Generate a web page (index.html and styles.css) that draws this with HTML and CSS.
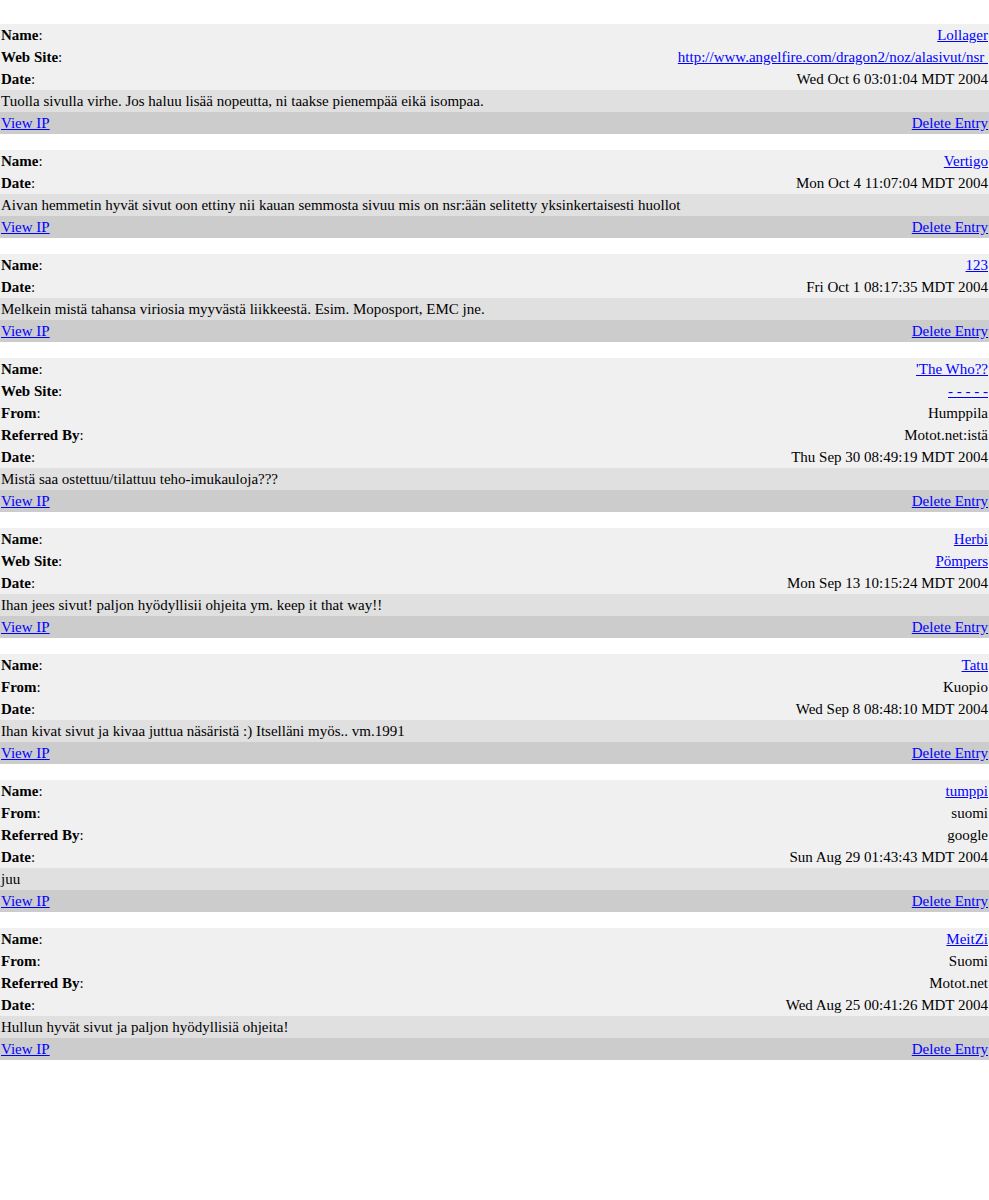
FILE: index.html
```html
<!DOCTYPE html>
<html lang="fi">
<head>
    <meta charset="UTF-8">
    <title>Vieraskirja</title>
    <link rel="stylesheet" href="styles.css">
</head>
<body>
    <div class="guestbook">

        <div class="entry">
            <div class="row info"><span><b>Name</b>:</span><a href="#">Lollager</a></div>
            <div class="row info"><span><b>Web Site</b>:</span><a href="#">http://www.angelfire.com/dragon2/noz/alasivut/nsr&nbsp;</a></div>
            <div class="row info"><span><b>Date</b>:</span><span>Wed Oct 6 03:01:04 MDT 2004</span></div>
            <div class="row message">Tuolla sivulla virhe. Jos haluu lisää nopeutta, ni taakse pienempää eikä isompaa.</div>
            <div class="row actions"><a href="#">View IP</a><a href="#">Delete Entry</a></div>
        </div>

        <div class="entry">
            <div class="row info"><span><b>Name</b>:</span><a href="#">Vertigo</a></div>
            <div class="row info"><span><b>Date</b>:</span><span>Mon Oct 4 11:07:04 MDT 2004</span></div>
            <div class="row message">Aivan hemmetin hyvät sivut oon ettiny nii kauan semmosta sivuu mis on nsr:ään selitetty yksinkertaisesti huollot</div>
            <div class="row actions"><a href="#">View IP</a><a href="#">Delete Entry</a></div>
        </div>

        <div class="entry">
            <div class="row info"><span><b>Name</b>:</span><a href="#">123</a></div>
            <div class="row info"><span><b>Date</b>:</span><span>Fri Oct 1 08:17:35 MDT 2004</span></div>
            <div class="row message">Melkein mistä tahansa viriosia myyvästä liikkeestä. Esim. Moposport, EMC jne.</div>
            <div class="row actions"><a href="#">View IP</a><a href="#">Delete Entry</a></div>
        </div>

        <div class="entry">
            <div class="row info"><span><b>Name</b>:</span><a href="#">'The Who??</a></div>
            <div class="row info"><span><b>Web Site</b>:</span><a href="#">- - - - -</a></div>
            <div class="row info"><span><b>From</b>:</span><span>Humppila</span></div>
            <div class="row info"><span><b>Referred By</b>:</span><span>Motot.net:istä</span></div>
            <div class="row info"><span><b>Date</b>:</span><span>Thu Sep 30 08:49:19 MDT 2004</span></div>
            <div class="row message">Mistä saa ostettuu/tilattuu teho-imukauloja???</div>
            <div class="row actions"><a href="#">View IP</a><a href="#">Delete Entry</a></div>
        </div>

        <div class="entry">
            <div class="row info"><span><b>Name</b>:</span><a href="#">Herbi</a></div>
            <div class="row info"><span><b>Web Site</b>:</span><a href="#">Pömpers</a></div>
            <div class="row info"><span><b>Date</b>:</span><span>Mon Sep 13 10:15:24 MDT 2004</span></div>
            <div class="row message">Ihan jees sivut! paljon hyödyllisii ohjeita ym. keep it that way!!</div>
            <div class="row actions"><a href="#">View IP</a><a href="#">Delete Entry</a></div>
        </div>

        <div class="entry">
            <div class="row info"><span><b>Name</b>:</span><a href="#">Tatu</a></div>
            <div class="row info"><span><b>From</b>:</span><span>Kuopio</span></div>
            <div class="row info"><span><b>Date</b>:</span><span>Wed Sep 8 08:48:10 MDT 2004</span></div>
            <div class="row message">Ihan kivat sivut ja kivaa juttua näsäristä :) Itselläni myös.. vm.1991</div>
            <div class="row actions"><a href="#">View IP</a><a href="#">Delete Entry</a></div>
        </div>

        <div class="entry">
            <div class="row info"><span><b>Name</b>:</span><a href="#">tumppi</a></div>
            <div class="row info"><span><b>From</b>:</span><span>suomi</span></div>
            <div class="row info"><span><b>Referred By</b>:</span><span>google</span></div>
            <div class="row info"><span><b>Date</b>:</span><span>Sun Aug 29 01:43:43 MDT 2004</span></div>
            <div class="row message">juu</div>
            <div class="row actions"><a href="#">View IP</a><a href="#">Delete Entry</a></div>
        </div>

        <div class="entry">
            <div class="row info"><span><b>Name</b>:</span><a href="#">MeitZi</a></div>
            <div class="row info"><span><b>From</b>:</span><span>Suomi</span></div>
            <div class="row info"><span><b>Referred By</b>:</span><span>Motot.net</span></div>
            <div class="row info"><span><b>Date</b>:</span><span>Wed Aug 25 00:41:26 MDT 2004</span></div>
            <div class="row message">Hullun hyvät sivut ja paljon hyödyllisiä ohjeita!</div>
            <div class="row actions"><a href="#">View IP</a><a href="#">Delete Entry</a></div>
        </div>

    </div>
</body>
</html>
```

FILE: styles.css
```css
body {
    margin: 0;
    padding: 24px 0 0;
    font-family: "Liberation Serif", "Times New Roman", serif;
    font-size: 15px;
    color: #000;
    background: #fff;
}
.guestbook {
    display: flex;
    flex-direction: column;
    gap: 16px;
}
.entry {
    display: flex;
    flex-direction: column;
}
.row {
    display: flex;
    justify-content: space-between;
    height: 22px;
    line-height: 22px;
    padding: 0 1px;
    white-space: nowrap;
}
.info {
    background-color: #f0f0f0;
}
.message {
    background-color: #e0e0e0;
}
.actions {
    background-color: #cccccc;
}
a {
    color: #0000ff;
}
```
